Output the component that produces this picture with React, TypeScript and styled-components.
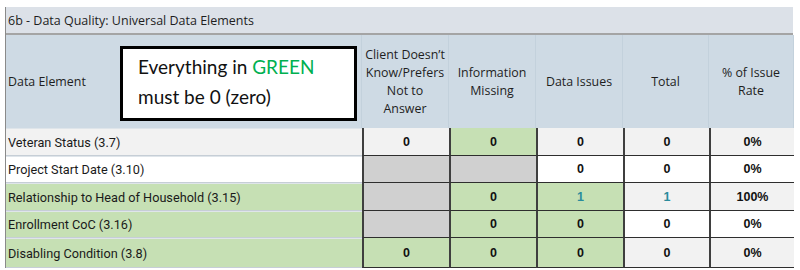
import React from "react";
import styled, { createGlobalStyle } from "styled-components";

const Global = createGlobalStyle`
  html, body { margin: 0; padding: 0; background: #ffffff; }
  body { width: 800px; height: 270px; overflow: hidden; }
`;

const COLS = "356px 87px 87px 87px 86px 85px";

const Page = styled.div`
  padding: 7px 0 0 5px;
  width: 788px;
`;

const Table = styled.div`
  position: relative;
  border-left: 1px solid #8a8a8a;
`;

const TitleBar = styled.div`
  height: 26px;
  background: #dce1e8;
  border-bottom: 2px solid #a4a4a4;
  display: flex;
  align-items: center;
  padding-left: 2px;
  font-family: "Open Sans", "Noto Sans", sans-serif;
  font-size: 12.5px;
  color: #1e1e1e;
`;

const HeaderRow = styled.div`
  position: relative;
  display: grid;
  grid-template-columns: ${COLS};
  height: 93px;
  background: #cedae4;
`;

const HeadCell = styled.div<{ $left?: boolean }>`
  display: flex;
  align-items: center;
  justify-content: ${(p) => (p.$left ? "flex-start" : "center")};
  text-align: ${(p) => (p.$left ? "left" : "center")};
  padding: ${(p) => (p.$left ? "0 0 0 2px" : "0 1px")};
  border-right: 1px solid #c3d1dc;
  font-family: "Open Sans", "Noto Sans", sans-serif;
  font-size: 12.4px;
  line-height: 18px;
  color: #1e1e1e;
  &:last-child { border-right: none; }
`;

const Note = styled.div`
  position: absolute;
  left: 114px;
  top: 11px;
  width: 216px;
  height: 66px;
  border: 3px solid #000;
  background: #fff;
  padding: 3px 0 0 15px;
  font-family: Lato, "Open Sans", sans-serif;
  font-size: 19px;
  line-height: 30px;
  color: #111;
`;

const Green = styled.span`
  color: #00b050;
`;

const Row = styled.div<{ $h: number }>`
  display: grid;
  grid-template-columns: ${COLS};
  height: ${(p) => p.$h}px;
`;

const bgMap: Record<string, string> = {
  light: "#f2f2f2",
  white: "#ffffff",
  green: "#c6e0b4",
  gray: "#d0d0d0",
};

const Label = styled.div<{ $bg: string }>`
  display: flex;
  align-items: center;
  padding-left: 2px;
  background: ${(p) => bgMap[p.$bg]};
  border-bottom: 1px solid #c6ced6;
  border-top: 1px solid #dfe5ea;
  font-family: Roboto, "Liberation Sans", sans-serif;
  font-size: 12.7px;
  color: #1a1a1a;
`;

const Num = styled.div<{ $bg: string; $teal?: boolean }>`
  display: flex;
  align-items: center;
  justify-content: center;
  background: ${(p) => bgMap[p.$bg]};
  border-left: 2px solid #3f3f3f;
  border-bottom: 1px solid #2e2e2e;
  font-family: "Liberation Sans", Arial, sans-serif;
  font-weight: bold;
  font-size: 12.5px;
  color: ${(p) => (p.$teal ? "#2a8c9c" : "#111")};
`;

type CellDef = { v?: string; bg: string; teal?: boolean };
type RowDef = { label: string; bg: string; h: number; cells: CellDef[] };

const rows: RowDef[] = [
  {
    label: "Veteran Status (3.7)",
    bg: "light",
    h: 28,
    cells: [
      { v: "0", bg: "light" },
      { v: "0", bg: "green" },
      { v: "0", bg: "light" },
      { v: "0", bg: "light" },
      { v: "0%", bg: "light" },
    ],
  },
  {
    label: "Project Start Date (3.10)",
    bg: "white",
    h: 27,
    cells: [
      { bg: "gray" },
      { bg: "gray" },
      { v: "0", bg: "white" },
      { v: "0", bg: "white" },
      { v: "0%", bg: "white" },
    ],
  },
  {
    label: "Relationship to Head of Household (3.15)",
    bg: "green",
    h: 28,
    cells: [
      { bg: "gray" },
      { v: "0", bg: "green" },
      { v: "1", bg: "green", teal: true },
      { v: "1", bg: "light", teal: true },
      { v: "100%", bg: "light" },
    ],
  },
  {
    label: "Enrollment CoC (3.16)",
    bg: "green",
    h: 27,
    cells: [
      { bg: "gray" },
      { v: "0", bg: "green" },
      { v: "0", bg: "green" },
      { v: "0", bg: "white" },
      { v: "0%", bg: "white" },
    ],
  },
  {
    label: "Disabling Condition (3.8)",
    bg: "green",
    h: 30,
    cells: [
      { v: "0", bg: "green" },
      { v: "0", bg: "green" },
      { v: "0", bg: "green" },
      { v: "0", bg: "light" },
      { v: "0%", bg: "light" },
    ],
  },
];

export default function App() {
  return (
    <Page>
      <Global />
      <Table>
        <TitleBar>6b - Data Quality: Universal Data Elements</TitleBar>
        <HeaderRow>
          <HeadCell $left>Data Element</HeadCell>
          <HeadCell>
            Client Doesn’t
            <br />
            Know/Prefers
            <br />
            Not to
            <br />
            Answer
          </HeadCell>
          <HeadCell>
            Information
            <br />
            Missing
          </HeadCell>
          <HeadCell>Data Issues</HeadCell>
          <HeadCell>Total</HeadCell>
          <HeadCell>
            % of Issue
            <br />
            Rate
          </HeadCell>
          <Note>
            Everything in <Green>GREEN</Green>
            <br />
            must be 0 (zero)
          </Note>
        </HeaderRow>
        {rows.map((r) => (
          <Row key={r.label} $h={r.h}>
            <Label $bg={r.bg}>{r.label}</Label>
            {r.cells.map((c, i) => (
              <Num key={i} $bg={c.bg} $teal={c.teal}>
                {c.v}
              </Num>
            ))}
          </Row>
        ))}
      </Table>
    </Page>
  );
}
